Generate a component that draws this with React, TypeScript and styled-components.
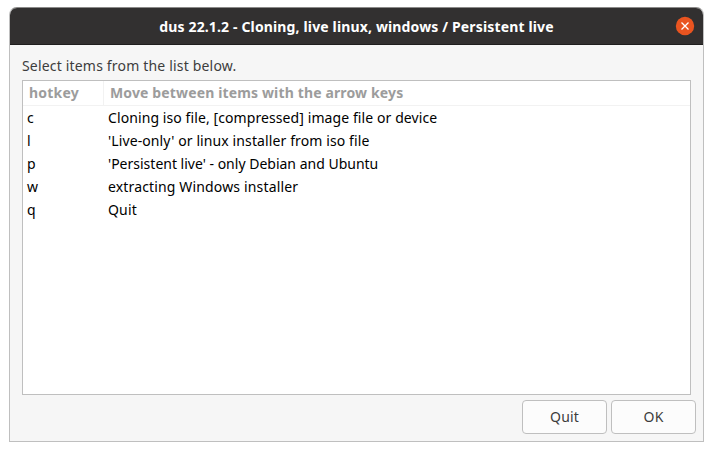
import React from "react";
import styled, { createGlobalStyle } from "styled-components";

const GlobalStyle = createGlobalStyle`
  * {
    box-sizing: border-box;
  }
  body {
    margin: 0;
    background: #fff;
    font: 14px/20px "Noto Sans", "Open Sans", sans-serif;
    color: #3d3d3d;
  }
`;

const Page = styled.main`
  width: 713px;
  height: 451px;
  padding: 7px 9px 9px;
`;

const Dialog = styled.section`
  display: flex;
  flex-direction: column;
  width: 695px;
  height: 435px;
  border: 1px solid #bfbfbf;
  border-top-color: #8b8a89;
  border-radius: 8px 8px 0 0;
  background: #f6f6f6;
  overflow: hidden;
`;

const TitleBar = styled.header`
  display: grid;
  grid-template-columns: 28px 1fr 28px;
  align-items: center;
  flex: none;
  height: 37px;
  background: #323030;
  border-bottom: 1px solid #1f1e1e;
`;

const Title = styled.h1`
  margin: 0;
  font-size: 14px;
  line-height: 37px;
  height: 36px;
  font-weight: 700;
  text-align: center;
  letter-spacing: 0.145px;
  color: #fff;
`;

const CloseButton = styled.button`
  display: block;
  width: 20px;
  height: 20px;
  padding: 0;
  border: 0;
  background: none;
  svg {
    display: block;
  }
`;

const Body = styled.div`
  display: flex;
  flex-direction: column;
  flex: 1;
  padding: 10px 7px 7px 12px;
`;

const Prompt = styled.p`
  margin: 0 0 5px;
  line-height: 21px;
  height: 20px;
  letter-spacing: 0.18px;
`;

const List = styled.div`
  width: 669px;
  height: 315px;
  border: 1px solid #bfbfbf;
  background: #fff;
`;

const columns = "81px 1fr";

const ListHeader = styled.div`
  display: grid;
  grid-template-columns: ${columns};
  height: 25px;
  border-bottom: 1px solid #f2f2f2;
`;

const HeaderCell = styled.div<{ $tracking: number; $divided?: boolean }>`
  padding-left: 6px;
  line-height: 23px;
  font-weight: 700;
  color: #9c9c9c;
  letter-spacing: ${(p) => p.$tracking}px;
  border-right: ${(p) => (p.$divided ? "1px solid #f2f2f2" : "0")};
`;

const Row = styled.div`
  display: grid;
  grid-template-columns: ${columns};
  height: 23px;
  line-height: 23px;
  color: #000;
`;

const Cell = styled.div<{ $tracking?: number }>`
  padding-left: 4px;
  letter-spacing: ${(p) => p.$tracking ?? 0}px;
`;

const Actions = styled.footer`
  display: flex;
  justify-content: flex-end;
  gap: 4px;
  margin-top: 5px;
`;

const ActionButton = styled.button`
  width: 85px;
  height: 34px;
  padding: 0;
  border: 1px solid #bfbfbf;
  border-radius: 4px;
  background: #fcfcfc;
  color: #3d3d3d;
  font: inherit;
  line-height: 32px;
  letter-spacing: 0.15px;
`;

const items = [
  { key: "c", label: "Cloning iso file, [compressed] image file or device", tracking: 0.09 },
  { key: "l", label: "'Live-only' or linux installer from iso file", tracking: 0.11 },
  { key: "p", label: "'Persistent live' - only Debian and Ubuntu", tracking: 0 },
  { key: "w", label: "extracting Windows installer", tracking: 0.15 },
  { key: "q", label: "Quit", tracking: 0.15 },
];

export default function App() {
  return (
    <Page>
      <GlobalStyle />
      <Dialog>
        <TitleBar>
          <span />
          <Title>dus 22.1.2 - Cloning, live linux, windows / Persistent live</Title>
          <CloseButton aria-label="Close">
            <svg width="20" height="20" viewBox="0 0 20 20">
              <circle cx="10" cy="10" r="9.2" fill="#e95420" />
              <path d="M6.5 6.5l7 7m0-7l-7 7" stroke="#fff" strokeWidth="1.3" fill="none" />
            </svg>
          </CloseButton>
        </TitleBar>
        <Body>
          <Prompt>Select items from the list below.</Prompt>
          <List>
            <ListHeader>
              <HeaderCell $tracking={0.2} $divided>hotkey</HeaderCell>
              <HeaderCell $tracking={0.14}>Move between items with the arrow keys</HeaderCell>
            </ListHeader>
            {items.map((item) => (
              <Row key={item.key}>
                <Cell>{item.key}</Cell>
                <Cell $tracking={item.tracking}>{item.label}</Cell>
              </Row>
            ))}
          </List>
          <Actions>
            <ActionButton>Quit</ActionButton>
            <ActionButton>OK</ActionButton>
          </Actions>
        </Body>
      </Dialog>
    </Page>
  );
}
